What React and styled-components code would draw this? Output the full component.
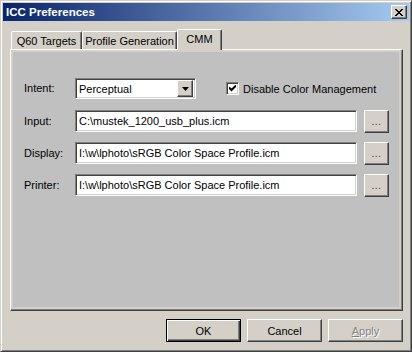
import React from 'react';
import styled, { createGlobalStyle } from 'styled-components';

const GlobalStyle = createGlobalStyle`
  html, body {
    margin: 0;
    padding: 0;
    background: #d4d0c8;
  }
  body {
    font-family: "Liberation Sans", Arial, sans-serif;
    font-size: 11px;
    color: #000;
  }
`;

const raised = `
  border: 1px solid;
  border-color: #fff #404040 #404040 #fff;
  box-shadow: inset -1px -1px #808080, inset 1px 1px #d4d0c8;
`;

const sunken = `
  border: 1px solid;
  border-color: #808080 #fff #fff #808080;
  box-shadow: inset 1px 1px #404040, inset -1px -1px #d4d0c8;
`;

const Window = styled.div`
  box-sizing: border-box;
  width: 412px;
  height: 352px;
  background: #d4d0c8;
  border: 1px solid;
  border-color: #d4d0c8 #404040 #404040 #d4d0c8;
  box-shadow: inset 1px 1px #fff, inset -1px -1px #808080;
  padding: 2px;
  display: flex;
  flex-direction: column;
`;

const TitleBar = styled.div`
  height: 18px;
  background: linear-gradient(to right, #0a246a, #a6caf0);
  display: flex;
  align-items: center;
  justify-content: space-between;
  padding: 0 2px 0 3px;
`;

const Title = styled.span`
  color: #fff;
  font-weight: bold;
  font-size: 11.5px;
`;

const CloseButton = styled.div`
  box-sizing: border-box;
  width: 16px;
  height: 14px;
  background: #d4d0c8;
  ${raised}
  display: flex;
  align-items: center;
  justify-content: center;
`;

const Body = styled.div`
  flex: 1;
  display: flex;
  flex-direction: column;
  padding: 8px 6px 7px 7px;
`;

const TabRow = styled.div`
  display: flex;
  align-items: flex-end;
  height: 20px;
  padding-left: 1px;
  position: relative;
  z-index: 1;
`;

const Tab = styled.div`
  box-sizing: border-box;
  width: ${(p) => p.$width}px;
  height: ${(p) => (p.$active ? '21px' : '18px')};
  margin-bottom: ${(p) => (p.$active ? '-1px' : '0')};
  padding-top: ${(p) => (p.$active ? '3px' : '3px')};
  background: #d4d0c8;
  border-top: 1px solid #fff;
  border-left: 1px solid #fff;
  border-right: 1px solid #404040;
  border-radius: 2px 2px 0 0;
  box-shadow: inset -1px 0 #808080;
  white-space: nowrap;
  text-align: center;
`;

const Panel = styled.div`
  box-sizing: border-box;
  height: 262px;
  background: #d4d0c8;
  border: 1px solid;
  border-color: #fff #404040 #404040 #fff;
  box-shadow: inset -1px -1px #808080;
  padding: 2px 3px 3px 2px;
  display: flex;
`;

const Page = styled.div`
  flex: 1;
  background: #c0c0c0;
  padding: 26px 10px 0 11px;
`;

const FormGrid = styled.div`
  display: grid;
  grid-template-columns: 44px 1fr 25px;
  grid-auto-rows: 23px;
  column-gap: 7px;
  row-gap: 9px;
  align-items: start;
`;

const Label = styled.label`
  line-height: ${(p) => p.$lh || 22}px;
  white-space: nowrap;
`;

const IntentRow = styled.div`
  grid-column: 2 / 4;
  display: flex;
  align-items: center;
  height: 21px;
`;

const Combo = styled.div`
  box-sizing: border-box;
  width: 121px;
  height: 21px;
  background: #fff;
  ${sunken}
  display: flex;
  align-items: center;
  padding: 2px 2px 2px 3px;
`;

const ComboText = styled.span`
  flex: 1;
`;

const ComboButton = styled.div`
  box-sizing: border-box;
  width: 16px;
  height: 17px;
  background: #d4d0c8;
  ${raised}
  display: flex;
  align-items: center;
  justify-content: center;
`;

const CheckWrap = styled.div`
  display: flex;
  align-items: center;
  margin-left: 30px;
  gap: 4px;
`;

const CheckBox = styled.div`
  box-sizing: border-box;
  width: 13px;
  height: 13px;
  background: #fff;
  ${sunken}
  display: flex;
  align-items: center;
  justify-content: center;
`;

const TextField = styled.div`
  box-sizing: border-box;
  height: 22px;
  background: #fff;
  ${sunken}
  padding: 0 3px;
  line-height: 20px;
  white-space: nowrap;
  overflow: hidden;
`;

const BrowseButton = styled.div`
  box-sizing: border-box;
  height: 23px;
  width: 25px;
  background: #d4d0c8;
  ${raised}
  display: flex;
  align-items: center;
  justify-content: center;
  font-size: 10px;
  color: #333;
  padding-bottom: 1px;
  letter-spacing: 0.5px;
`;

const ButtonRow = styled.div`
  display: flex;
  justify-content: flex-end;
  gap: 6px;
  margin-top: 8px;
`;

const Button = styled.div`
  box-sizing: border-box;
  width: 75px;
  height: 23px;
  background: #d4d0c8;
  display: flex;
  align-items: center;
  justify-content: center;
  ${(p) =>
    p.$default
      ? `border: 1px solid #000;
         box-shadow: inset 1px 1px #fff, inset -1px -1px #404040, inset -2px -2px #808080;`
      : `border: 1px solid;
         border-color: #fff #404040 #404040 #fff;
         box-shadow: inset -1px -1px #808080;`}
  color: ${(p) => (p.$disabled ? '#808080' : '#000')};
  text-shadow: ${(p) => (p.$disabled ? '1px 1px #fff' : 'none')};
`;

const Mnemonic = styled.span`
  text-decoration: underline;
`;

const profiles = [
  { label: 'Input:', path: 'C:\\mustek_1200_usb_plus.icm' },
  { label: 'Display:', path: 'I:\\w\\lphoto\\sRGB Color Space Profile.icm' },
  { label: 'Printer:', path: 'I:\\w\\lphoto\\sRGB Color Space Profile.icm' },
];

function App() {
  return (
    <>
      <GlobalStyle />
      <Window>
        <TitleBar>
          <Title>ICC Preferences</Title>
          <CloseButton>
            <svg width="8" height="7" viewBox="0 0 8 7">
              <path d="M0 0L7 7M1 0L8 7M7 0L0 7M8 0L1 7" stroke="#000" strokeWidth="1" />
            </svg>
          </CloseButton>
        </TitleBar>
        <Body>
          <TabRow>
            <Tab $width={71}>Q60 Targets</Tab>
            <Tab $width={95}>Profile Generation</Tab>
            <Tab $active $width={45}>CMM</Tab>
          </TabRow>
          <Panel>
            <Page>
              <FormGrid>
                <Label $lh={21}>Intent:</Label>
                <IntentRow>
                  <Combo>
                    <ComboText>Perceptual</ComboText>
                    <ComboButton>
                      <svg width="7" height="4" viewBox="0 0 7 4">
                        <path d="M0 0H7L3.5 4Z" fill="#000" />
                      </svg>
                    </ComboButton>
                  </Combo>
                  <CheckWrap>
                    <CheckBox>
                      <svg width="7" height="7" viewBox="0 0 7 7">
                        <path d="M0 2.5L2.5 5L7 0.5" stroke="#000" strokeWidth="2" fill="none" />
                      </svg>
                    </CheckBox>
                    <span>Disable Color Management</span>
                  </CheckWrap>
                </IntentRow>
                {profiles.map((p) => (
                  <React.Fragment key={p.label}>
                    <Label>{p.label}</Label>
                    <TextField>{p.path}</TextField>
                    <BrowseButton>...</BrowseButton>
                  </React.Fragment>
                ))}
              </FormGrid>
            </Page>
          </Panel>
          <ButtonRow>
            <Button $default>OK</Button>
            <Button>Cancel</Button>
            <Button $disabled>
              <Mnemonic>A</Mnemonic>pply
            </Button>
          </ButtonRow>
        </Body>
      </Window>
    </>
  );
}

export default App;
